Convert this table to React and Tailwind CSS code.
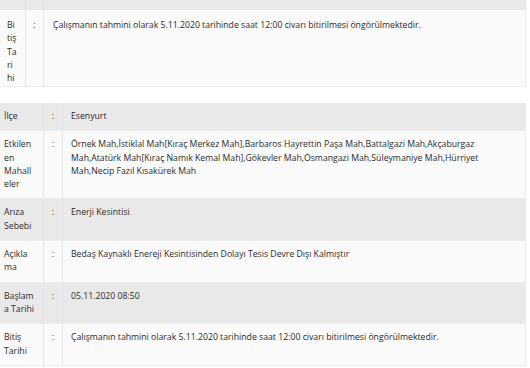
export default function App() {
  const font = { fontFamily: '"Open Sans", "Noto Sans", sans-serif' };
  const rows = [
    { label: ["İlçe"], value: ["Esenyurt"], gray: true },
    {
      label: ["Etkilen", "en", "Mahall", "eler"],
      value: [
        "Örnek Mah,İstiklal Mah[Kıraç Merkez Mah],Barbaros Hayrettin Paşa Mah,Battalgazi Mah,Akçaburgaz",
        "Mah,Atatürk Mah[Kıraç Namık Kemal Mah],Gökevler Mah,Osmangazi Mah,Süleymaniye Mah,Hürriyet",
        "Mah,Necip Fazıl Kısakürek Mah",
      ],
    },
    { label: ["Arıza", "Sebebi"], value: ["Enerji Kesintisi"], gray: true },
    { label: ["Açıkla", "ma"], value: ["Bedaş Kaynaklı Enereji Kesintisinden Dolayı Tesis Devre Dışı Kalmıştır"] },
    { label: ["Başlam", "a Tarihi"], value: ["05.11.2020 08:50"], gray: true },
    {
      label: ["Bitiş", "Tarihi"],
      value: ["Çalışmanın tahmini olarak 5.11.2020 tarihinde saat 12:00 civarı bitirilmesi öngörülmektedir."],
    },
  ];
  const Lines = ({ lines }) =>
    lines.map((l, i) => (
      <div key={i} className="whitespace-nowrap">
        {l}
      </div>
    ));
  return (
    <div
      className="w-[530px] h-[368px] bg-white overflow-hidden text-[8.7px] leading-[13.3px] text-[#2b2b2b]"
      style={font}
    >
      <div className="w-[526px]">
        <div className="flex h-[10px] bg-[#e9e9e9] border-r border-[#e6e6e6]">
          <div className="w-[26px] border-r border-[#e2e2e2]" />
          <div className="w-[18px] border-r border-[#e2e2e2]" />
          <div className="flex-1" />
        </div>
        <div className="flex h-[77px] bg-[#fafafa] border-b border-r border-[#ededed]">
          <div className="w-[26px] shrink-0 border-r border-[#e6e6e6] pl-[7px] pt-[9px]">
            <Lines lines={["Bi", "tiş", "Ta", "ri", "hi"]} />
          </div>
          <div className="w-[18px] shrink-0 border-r border-[#e6e6e6] pt-[9px] text-center">:</div>
          <div className="flex-1 pl-[9px] pt-[9px] whitespace-nowrap">
            Çalışmanın tahmini olarak 5.11.2020 tarihinde saat 12:00 civarı bitirilmesi öngörülmektedir.
          </div>
        </div>
      </div>
      <div className="w-[526px] mt-[16px]">
        {rows.map((r, i) => (
          <div
            key={i}
            className={`flex border-b border-r border-[#ececec] ${r.gray ? "bg-[#e9e9e9]" : "bg-[#fafafa]"}`}
          >
            <div className="w-[44px] shrink-0 border-r border-[#e4e4e4] pl-[4px] py-[7px]">
              <Lines lines={r.label} />
            </div>
            <div className="w-[19px] shrink-0 border-r border-[#e4e4e4] py-[7px] text-center">:</div>
            <div className="flex-1 pl-[8px] py-[7px]">
              <Lines lines={r.value} />
            </div>
          </div>
        ))}
      </div>
    </div>
  );
}
